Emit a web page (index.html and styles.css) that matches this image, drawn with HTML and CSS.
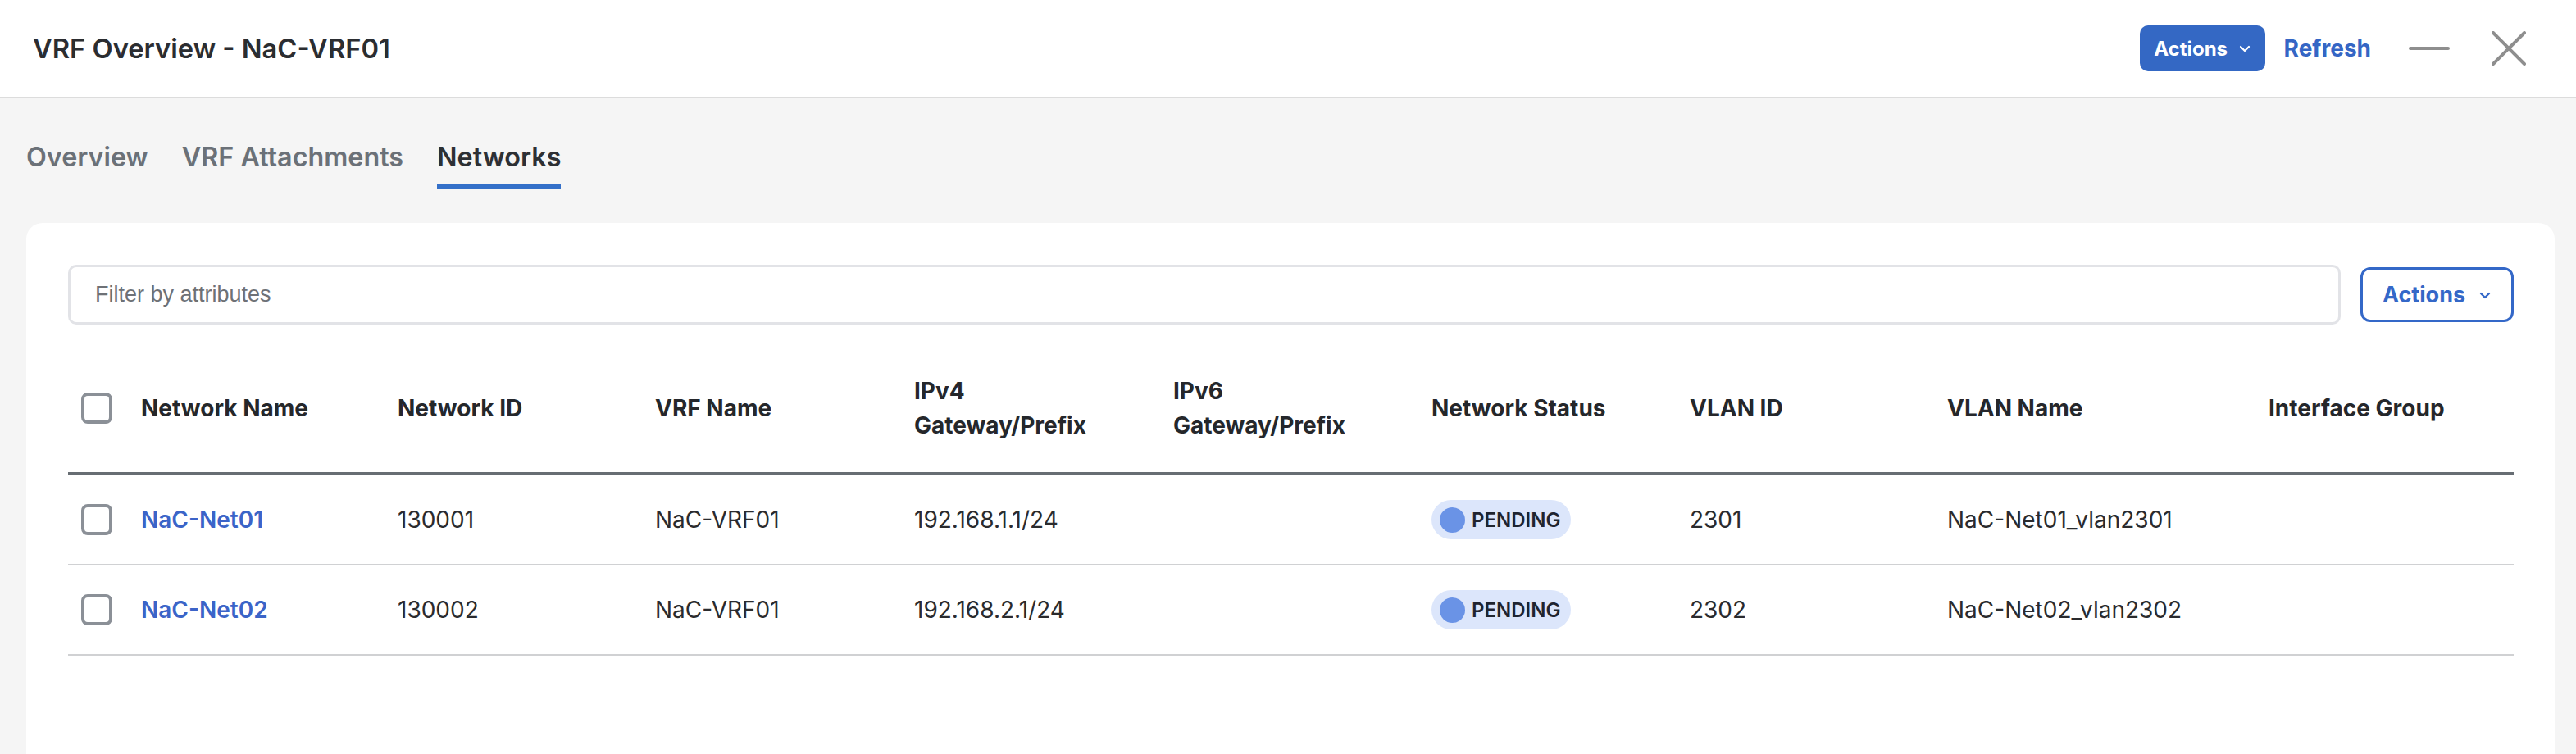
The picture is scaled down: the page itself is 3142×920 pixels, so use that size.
FILE: index.html
```html
<!DOCTYPE html>
<html lang="en">
<head>
    <meta charset="UTF-8">
    <title>VRF Overview - NaC-VRF01</title>
    <link rel="stylesheet" href="styles.css">
</head>
<body>
    <div class="topbar">
        <h1 class="title">VRF Overview - NaC-VRF01</h1>
        <div class="topbar-actions">
            <button class="btn-primary">Actions
                <svg width="14" height="10" viewBox="0 0 14 10"><polyline points="2,3 7,8 12,3" fill="none" stroke="#fff" stroke-width="2.2" stroke-linecap="round" stroke-linejoin="round"/></svg>
            </button>
            <a class="refresh">Refresh</a>
            <span class="icon-min"></span>
            <svg class="icon-close" width="42" height="42" viewBox="0 0 42 42"><path d="M2 2 L40 40 M40 2 L2 40" stroke="#8e8e8e" stroke-width="4" stroke-linecap="round"/></svg>
        </div>
    </div>

    <div class="tabs">
        <div class="tab">Overview</div>
        <div class="tab">VRF Attachments</div>
        <div class="tab active">Networks</div>
    </div>

    <div class="card">
        <div class="toolbar">
            <input class="filter" type="text" placeholder="Filter by attributes">
            <button class="btn-outline">Actions
                <svg width="16" height="10" viewBox="0 0 16 10"><polyline points="3,3 8,8 13,3" fill="none" stroke="#3468c8" stroke-width="2.4" stroke-linecap="round" stroke-linejoin="round"/></svg>
            </button>
        </div>

        <table class="grid">
            <colgroup>
                <col style="width:73px"><col style="width:313px"><col style="width:314px"><col style="width:316px"><col style="width:316px">
                <col style="width:315px"><col style="width:315px"><col style="width:314px"><col style="width:392px"><col>
            </colgroup>
            <thead>
                <tr>
                    <th><div class="checkbox"></div></th>
                    <th>Network Name</th>
                    <th>Network ID</th>
                    <th>VRF Name</th>
                    <th>IPv4<br>Gateway/Prefix</th>
                    <th>IPv6<br>Gateway/Prefix</th>
                    <th>Network Status</th>
                    <th>VLAN ID</th>
                    <th>VLAN Name</th>
                    <th>Interface Group</th>
                </tr>
            </thead>
            <tbody>
                <tr>
                    <td><div class="checkbox"></div></td>
                    <td><a class="link">NaC-Net01</a></td>
                    <td>130001</td>
                    <td>NaC-VRF01</td>
                    <td>192.168.1.1/24</td>
                    <td></td>
                    <td><span class="badge"><span class="dot"></span>PENDING</span></td>
                    <td>2301</td>
                    <td>NaC-Net01_vlan2301</td>
                    <td></td>
                </tr>
                <tr>
                    <td><div class="checkbox"></div></td>
                    <td><a class="link">NaC-Net02</a></td>
                    <td>130002</td>
                    <td>NaC-VRF01</td>
                    <td>192.168.2.1/24</td>
                    <td></td>
                    <td><span class="badge"><span class="dot"></span>PENDING</span></td>
                    <td>2302</td>
                    <td>NaC-Net02_vlan2302</td>
                    <td></td>
                </tr>
            </tbody>
        </table>
    </div>
</body>
</html>
```

FILE: styles.css
```css
body { margin: 0; background: #f5f5f5; font-family: Inter, "Noto Sans", sans-serif; color: #2a2c30; overflow: hidden; }

.topbar { height: 120px; background: #fff; border-bottom: 2px solid #dcdcdc; display: flex; align-items: center; justify-content: space-between; padding: 0 61px 0 40px; box-sizing: border-box; }
.title { margin: 0; font-size: 32.7px; font-weight: 600; color: #2b2d31; }
.topbar-actions { display: flex; align-items: center; }
.btn-primary { height: 56px; width: 153px; background: #3468c4; color: #fff; border: none; border-radius: 10px; font-family: inherit; font-size: 24px; font-weight: 700; display: flex; align-items: center; justify-content: center; gap: 14px; padding: 0; }
.refresh { margin-left: 23px; color: #3566c5; font-size: 28px; font-weight: 700; }
.icon-min { display: block; width: 50px; height: 4px; border-radius: 2px; background: #8e8e8e; margin-left: 46px; }
.icon-close { margin-left: 51px; }

.tabs { display: flex; gap: 41px; padding: 44px 0 0 32px; }
.tab { font-size: 32.3px; font-weight: 600; color: #6b7178; line-height: 56px; padding-bottom: 5px; border-bottom: 5px solid transparent; }
.tab.active { color: #2d3034; border-bottom-color: #3470c9; }

.card { background: #fff; border-radius: 20px; margin: 42px 26px 0 32px; padding: 51px 50px 0 51px; min-height: 700px; }
.toolbar { display: flex; align-items: center; gap: 24px; }
.filter { flex: 1; height: 73px; box-sizing: border-box; border: 3px solid #e2e3e7; border-radius: 10px; padding: 0 30px; font-family: "Liberation Sans", Arial, sans-serif; font-size: 27px; color: #2a2c30; outline: none; }
.filter::placeholder { color: #6e7176; }
.btn-outline { width: 187px; height: 67px; background: #fff; border: 3px solid #3468c8; border-radius: 12px; color: #3468c8; font-family: inherit; font-size: 27px; font-weight: 700; display: flex; align-items: center; justify-content: center; gap: 16px; padding: 0; }

.grid { width: 100%; border-collapse: collapse; table-layout: fixed; margin-top: 24px; }
.grid th { height: 156px; padding: 0 16px; text-align: left; vertical-align: middle; font-size: 28px; font-weight: 700; line-height: 42px; color: #25272b; border-bottom: 4px solid #676d73; }
.grid td { height: 108px; padding: 0 16px; vertical-align: middle; font-size: 28px; color: #2a2b2e; border-bottom: 2px solid #d0d1d3; white-space: nowrap; }
.checkbox { width: 38px; height: 38px; box-sizing: border-box; border: 4px solid #8b9097; border-radius: 8px; }
.link { color: #3b64c8; font-weight: 600; }
.badge { display: inline-flex; align-items: center; height: 48px; padding: 0 13px 0 10px; gap: 8px; border-radius: 24px; background: #dce6fb; font-size: 24px; font-weight: 600; color: #1f2430; }
.dot { width: 31px; height: 31px; border-radius: 50%; background: #6a93e6; }
```
